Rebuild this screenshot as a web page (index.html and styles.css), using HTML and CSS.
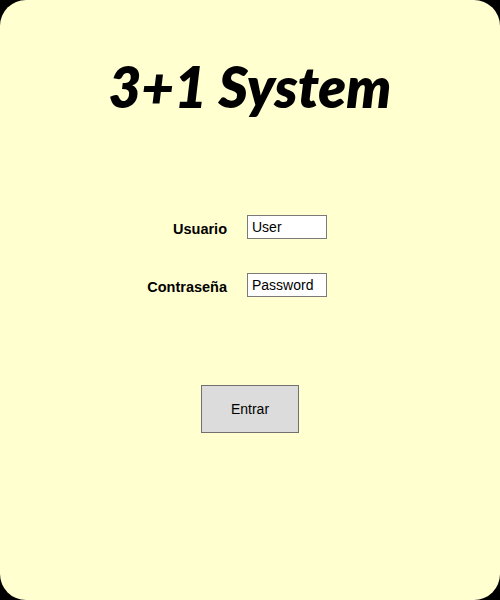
FILE: index.html
```html
<!DOCTYPE html>
<html lang="es">
<head>
<meta charset="utf-8">
<title>3+1 System</title>
<link rel="stylesheet" href="styles.css">
</head>
<body>
<main class="panel">
  <h1 class="title">3+1 System</h1>
  <form class="form">
    <label class="label" for="user">Usuario</label>
    <input class="field" id="user" type="text" value="User">
    <label class="label" for="pass">Contraseña</label>
    <input class="field" id="pass" type="text" value="Password">
  </form>
  <div class="actions">
    <button class="btn" type="button">Entrar</button>
  </div>
</main>
</body>
</html>
```
FILE: styles.css
```css
html, body {
  margin: 0;
  padding: 0;
  background: #000;
}
.panel {
  width: 500px;
  height: 600px;
  box-sizing: border-box;
  background: #ffffd0;
  border-radius: 26px;
  display: flex;
  flex-direction: column;
  align-items: center;
  padding-top: 48px;
  font-family: "Liberation Sans", Arial, sans-serif;
}
.title {
  margin: 0;
  font-family: Lato, "Open Sans", sans-serif;
  font-weight: 800;
  font-style: italic;
  font-size: 56.5px;
  line-height: 76px;
  color: #000;
  text-align: center;
}
.form {
  margin-top: 91px;
  align-self: flex-start;
  display: grid;
  grid-template-columns: 227px 80px;
  column-gap: 20px;
  row-gap: 34px;
  align-items: center;
}
.label {
  justify-self: end;
  margin-top: 3px;
  font-weight: 700;
  font-size: 14.5px;
  color: #000;
}
.field {
  box-sizing: border-box;
  width: 80px;
  height: 24px;
  margin: 0;
  padding: 0 4px;
  border: 1px solid #7a7a7a;
  background: #fff;
  font-family: "Liberation Sans", Arial, sans-serif;
  font-size: 14px;
  color: #000;
  outline: none;
}
.actions {
  margin-top: 88px;
}
.btn {
  box-sizing: border-box;
  width: 98px;
  height: 48px;
  margin: 0;
  background: #dcdcdc;
  border: 1px solid #707070;
  border-radius: 0;
  font-family: "Liberation Sans", Arial, sans-serif;
  font-size: 14px;
  color: #000;
}
```
